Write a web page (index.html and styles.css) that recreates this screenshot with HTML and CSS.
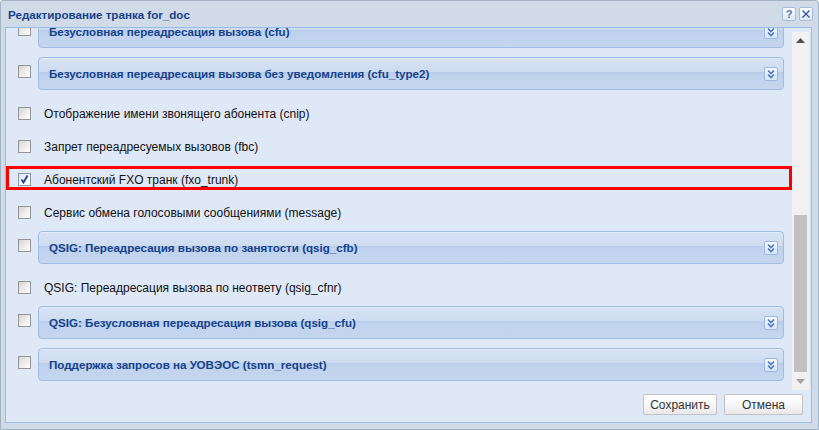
FILE: index.html
```html
<!DOCTYPE html>
<html lang="ru">
<head>
<meta charset="utf-8">
<title>Редактирование транка</title>
<link rel="stylesheet" href="styles.css">
</head>
<body>
<div class="window">
  <div class="titlebar">
    <span class="title">Редактирование транка for_doc</span>
    <div class="tools">
      <span class="tool help">?</span>
      <span class="tool close"><svg width="12" height="12" viewBox="0 0 12 12"><path d="M2.5 2.5 L9.5 9.5 M9.5 2.5 L2.5 9.5" stroke="#2f5597" stroke-width="1.3" fill="none"/></svg></span>
    </div>
  </div>
  <div class="panel">
    <div class="scroller">
      <div class="viewport">
        <div class="list">
          <div class="item fs">
            <span class="cb"></span>
            <div class="fieldset"><span class="legend">Безусловная переадресация вызова (cfu)</span><span class="toggle"><svg width="12" height="12" viewBox="0 0 12 12"><path d="M3 2.5 L6 5.5 L9 2.5 M3 6.5 L6 9.5 L9 6.5" stroke="#4a78bf" stroke-width="1.6" fill="none"/></svg></span></div>
          </div>
          <div class="item fs">
            <span class="cb"></span>
            <div class="fieldset"><span class="legend">Безусловная переадресация вызова без уведомления (cfu_type2)</span><span class="toggle"><svg width="12" height="12" viewBox="0 0 12 12"><path d="M3 2.5 L6 5.5 L9 2.5 M3 6.5 L6 9.5 L9 6.5" stroke="#4a78bf" stroke-width="1.6" fill="none"/></svg></span></div>
          </div>
          <div class="item">
            <span class="cb"></span>
            <span class="label">Отображение имени звонящего абонента (cnip)</span>
          </div>
          <div class="item">
            <span class="cb"></span>
            <span class="label">Запрет переадресуемых вызовов (fbc)</span>
          </div>
          <div class="item marked">
            <span class="cb checked"><svg width="11" height="11" viewBox="0 0 11 11"><path d="M2.5 5.5 L4.5 8.5 L8.5 1.5" stroke="#1e3f94" stroke-width="1.8" fill="none"/></svg></span>
            <span class="label">Абонентский FXO транк (fxo_trunk)</span>
            <span class="highlight"></span>
          </div>
          <div class="item">
            <span class="cb"></span>
            <span class="label">Сервис обмена голосовыми сообщениями (message)</span>
          </div>
          <div class="item fs">
            <span class="cb"></span>
            <div class="fieldset"><span class="legend">QSIG: Переадресация вызова по занятости (qsig_cfb)</span><span class="toggle"><svg width="12" height="12" viewBox="0 0 12 12"><path d="M3 2.5 L6 5.5 L9 2.5 M3 6.5 L6 9.5 L9 6.5" stroke="#4a78bf" stroke-width="1.6" fill="none"/></svg></span></div>
          </div>
          <div class="item">
            <span class="cb"></span>
            <span class="label">QSIG: Переадресация вызова по неответу (qsig_cfnr)</span>
          </div>
          <div class="item fs">
            <span class="cb"></span>
            <div class="fieldset"><span class="legend">QSIG: Безусловная переадресация вызова (qsig_cfu)</span><span class="toggle"><svg width="12" height="12" viewBox="0 0 12 12"><path d="M3 2.5 L6 5.5 L9 2.5 M3 6.5 L6 9.5 L9 6.5" stroke="#4a78bf" stroke-width="1.6" fill="none"/></svg></span></div>
          </div>
          <div class="item fs">
            <span class="cb"></span>
            <div class="fieldset"><span class="legend">Поддержка запросов на УОВЭОС (tsmn_request)</span><span class="toggle"><svg width="12" height="12" viewBox="0 0 12 12"><path d="M3 2.5 L6 5.5 L9 2.5 M3 6.5 L6 9.5 L9 6.5" stroke="#4a78bf" stroke-width="1.6" fill="none"/></svg></span></div>
          </div>
        </div>
      </div>
      <div class="scrollbar">
        <span class="sb-btn"><svg width="9" height="5" viewBox="0 0 9 5"><path d="M0 5 L4.5 0 L9 5 Z" fill="#505050"/></svg></span>
        <div class="track"><div class="thumb"></div></div>
        <span class="sb-btn"><svg width="9" height="5" viewBox="0 0 9 5"><path d="M0 0 L4.5 5 L9 0 Z" fill="#a3a3a3"/></svg></span>
      </div>
    </div>
    <div class="footer">
      <button class="btn save">Сохранить</button>
      <button class="btn cancel">Отмена</button>
    </div>
  </div>
</div>
</body>
</html>
```
FILE: styles.css
```css
html, body {
  margin: 0;
  padding: 0;
  background: #ffffff;
}
body {
  font-family: "Liberation Sans", Arial, sans-serif;
  font-size: 12px;
  color: #000;
}
.window {
  width: 819px;
  height: 430px;
  box-sizing: border-box;
  border: 1px solid #a3b3c6;
  border-radius: 3px 3px 0 0;
  background: #d0dbe7;
  display: flex;
  flex-direction: column;
}
.titlebar {
  height: 26px;
  flex: none;
  display: flex;
  align-items: center;
  padding: 0 5px 0 7px;
}
.title {
  font-weight: bold;
  font-size: 11.6px;
  color: #15428b;
  padding-top: 1px;
}
.tools {
  margin-left: auto;
  display: flex;
  gap: 3px;
}
.tool {
  width: 14px;
  height: 14px;
  box-sizing: border-box;
  border: 1px solid #a4bde0;
  border-radius: 2px;
  background: linear-gradient(#ffffff, #dbe6f4);
  display: flex;
  align-items: center;
  justify-content: center;
}
.help {
  font-weight: bold;
  font-size: 11px;
  color: #4b77b8;
  line-height: 1;
}
.panel {
  flex: 1;
  margin: 0 6px 6px 4px;
  border: 1px solid #99bbe8;
  background: #dfe8f6;
  display: flex;
  flex-direction: column;
  min-height: 0;
}
.scroller {
  height: 362px;
  flex: none;
  display: flex;
}
.viewport {
  flex: 1;
  overflow: hidden;
  position: relative;
}
.list {
  margin-top: -13px;
  padding: 0 8px 0 12px;
}
.item {
  display: flex;
  align-items: center;
  height: 29px;
  margin-bottom: 4px;
  position: relative;
}
.item.fs {
  align-items: flex-start;
  height: 33px;
  margin-bottom: 9px;
}
.cb {
  width: 13px;
  height: 13px;
  flex: none;
  box-sizing: border-box;
  border: 1px solid #959595;
  background: linear-gradient(135deg, #d4d4d4 0%, #ececec 50%, #ffffff 100%);
  display: flex;
  align-items: center;
  justify-content: center;
}
.cb.checked {
  background: linear-gradient(135deg, #dfe4ec 0%, #f4f6f9 60%, #ffffff 100%);
  border-color: #8c97a8;
}
.item.fs .cb {
  margin-top: 8px;
}
.label {
  margin-left: 13px;
  white-space: nowrap;
  color: #111;
}
.fieldset {
  flex: 1;
  margin-left: 7px;
  height: 33px;
  box-sizing: border-box;
  border: 1px solid #9fbce5;
  border-radius: 4px;
  background: linear-gradient(to bottom, #d7e3f4 0%, #cddcf0 44%, #b9cdea 46%, #bfd2ed 54%, #c5d6ee 100%);
  display: flex;
  align-items: center;
  padding: 0 5px 0 10px;
  box-shadow: inset 0 1px 0 #e3ecf8;
}
.legend {
  font-weight: bold;
  font-size: 11.6px;
  color: #15428b;
  white-space: nowrap;
}
.toggle {
  margin-left: auto;
  width: 14px;
  height: 14px;
  box-sizing: border-box;
  border: 1px solid #9ab8e2;
  border-radius: 2px;
  background: linear-gradient(#f6f9fd, #d8e4f4);
  display: flex;
  align-items: center;
  justify-content: center;
  margin-top: 1px;
}
.highlight {
  position: absolute;
  left: -12px;
  right: -8px;
  top: 1px;
  height: 24px;
  box-sizing: border-box;
  border: 3px solid #ff0000;
}
.scrollbar {
  width: 17px;
  flex: none;
  margin: 4px 2px 0 0;
  background: #f1f1f1;
  display: flex;
  flex-direction: column;
}
.sb-btn {
  height: 17px;
  flex: none;
  display: flex;
  align-items: center;
  justify-content: center;
}
.track {
  flex: 1;
  display: flex;
  flex-direction: column;
  justify-content: flex-end;
}
.thumb {
  height: 157px;
  margin: 0 2px 1px 2px;
  background: #c1c1c1;
}
.footer {
  flex: 1;
  display: flex;
  justify-content: flex-end;
  align-items: flex-start;
  gap: 7px;
  padding: 4px 8px 0 0;
}
.btn {
  height: 21px;
  box-sizing: border-box;
  border: 1px solid #c3c3c3;
  border-radius: 2px;
  background: linear-gradient(#ffffff 0%, #f7f7f7 50%, #e8e8e8 100%);
  font-family: "Liberation Sans", Arial, sans-serif;
  font-size: 12px;
  color: #333;
  padding: 0;
  margin: 0;
}
.save {
  width: 74px;
}
.cancel {
  width: 79px;
}
```
